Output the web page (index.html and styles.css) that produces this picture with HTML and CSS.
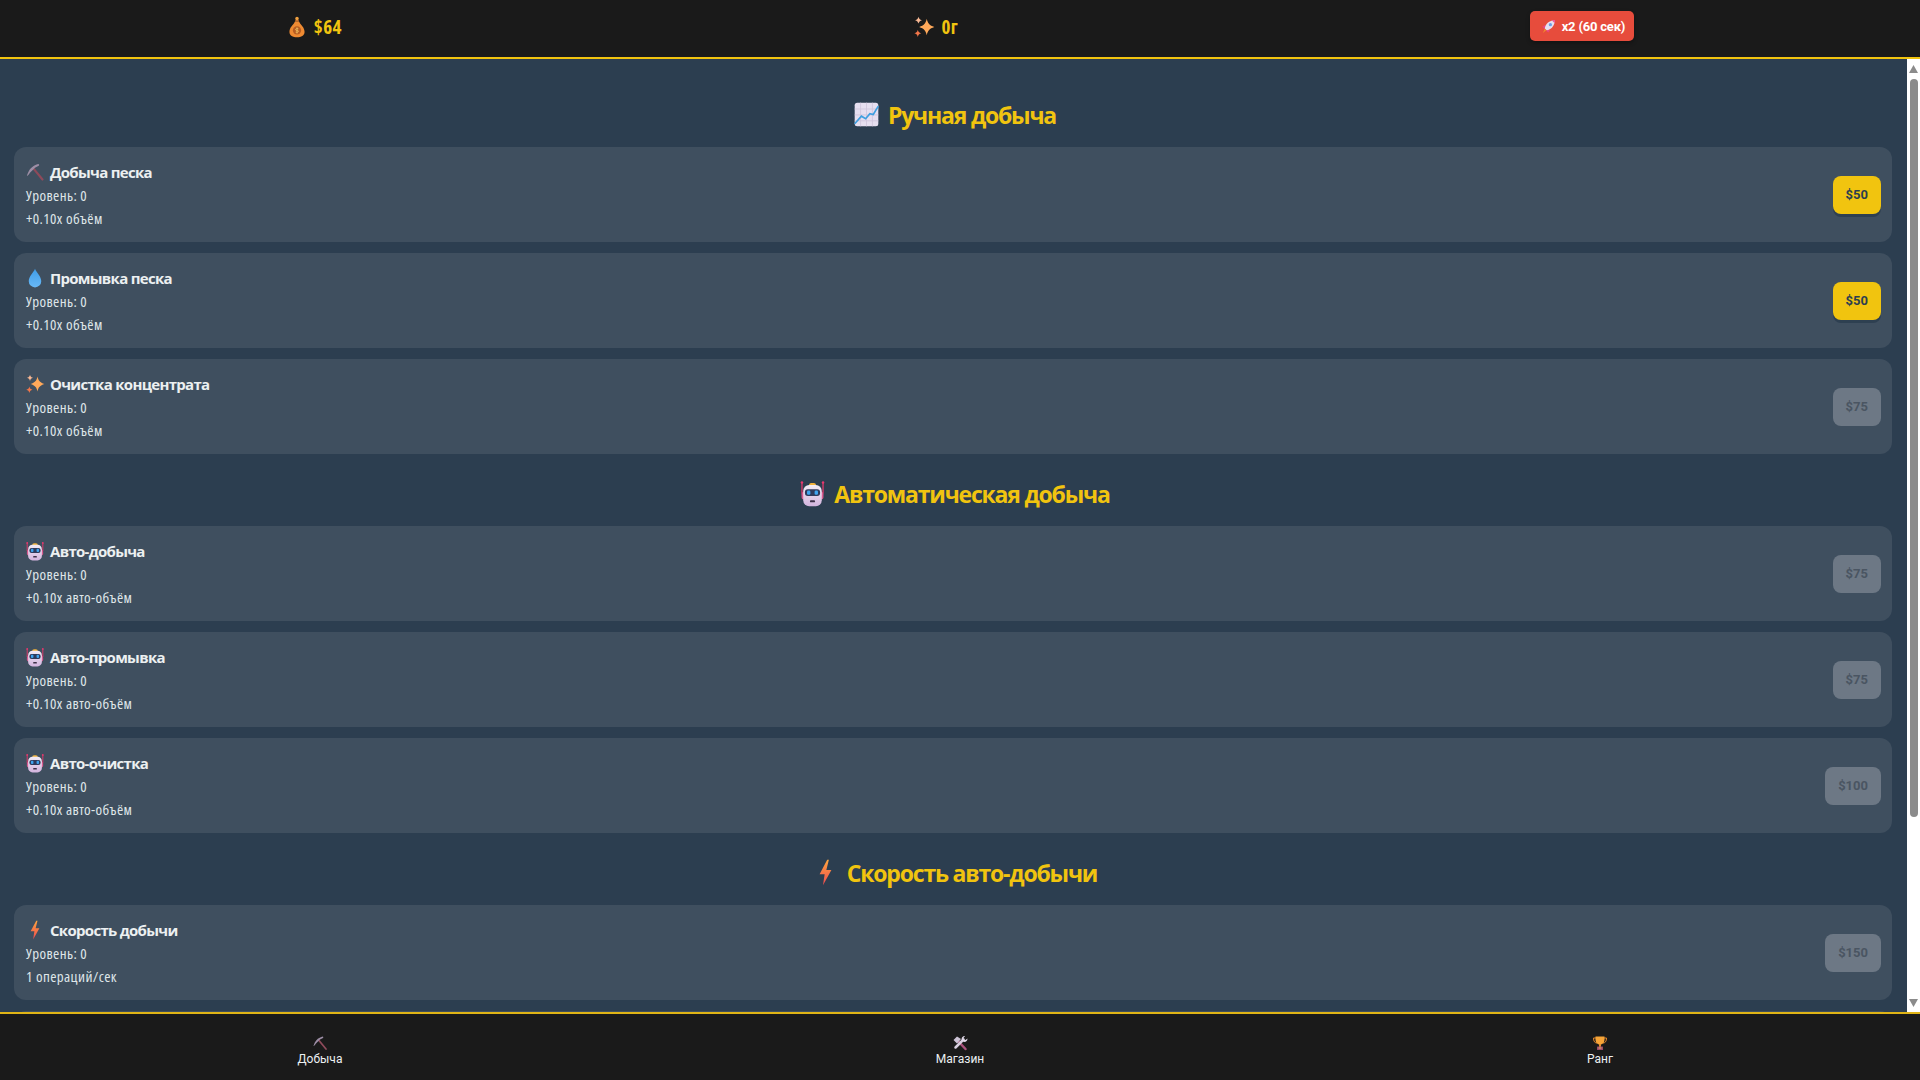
FILE: index.html
```html
<!DOCTYPE html>
<html lang="ru">
<head>
<meta charset="utf-8">
<title>Добыча</title>
<link rel="stylesheet" href="styles.css">
</head>
<body>

<svg class="sprites" width="0" height="0">
	<defs>
		<linearGradient id="bolt-fill" x1="0" y1="0" x2="0" y2="1">
			<stop offset="0" stop-color="#ffa63e"/>
			<stop offset="1" stop-color="#ee4a50"/>
		</linearGradient>
		<linearGradient id="robot-fill" x1="0" y1="0" x2="0" y2="1">
			<stop offset="0" stop-color="#f2ecf6"/>
			<stop offset="1" stop-color="#d3b4de"/>
		</linearGradient>
		<linearGradient id="drop-fill" x1="0" y1="0" x2="0" y2="1">
			<stop offset="0" stop-color="#3f9de8"/>
			<stop offset="1" stop-color="#68b8f6"/>
		</linearGradient>
		<symbol id="i-bag" viewBox="0 0 32 32">
			<path d="M13 8h6l-1-3h-4z" fill="#c9702c"/>
			<circle cx="16" cy="3.500" r="2.500" fill="#f0a040"/>
			<path d="M13 8h6c2 5 8 8 8 15 0 6-5 8-11 8S5 29 5 23c0-7 6-10 8-15z" fill="#ee8a32"/>
			<circle cx="16" cy="21" r="6" fill="#b65c22"/>
			<path d="M16 16.500v9M18 18.500h-3a1.300 1.300 0 0 0 0 2.500h2a1.300 1.300 0 0 1 0 2.500h-3" stroke="#f4c060" stroke-width="1.200" fill="none"/>
		</symbol>
		<symbol id="i-spark" viewBox="0 0 32 32">
			<path d="M20 4c1.500 7 4 9.500 11 12-7 2.500-9.500 5-11 12-1.500-7-4-9.500-11-12 7-2.500 9.500-5 11-12z" fill="#ffa95a"/>
			<path d="M8 1c.8 3 1.800 4 5 5-3.200 1-4.200 2-5 5-.8-3-1.800-4-5-5 3.200-1 4.200-2 5-5z" fill="#f8b894"/>
			<path d="M7 20c.8 3.200 1.800 4.200 5 5.200-3.200 1-4.200 2-5 5.300-.8-3.300-1.800-4.300-5-5.300 3.200-1 4.200-2 5-5.200z" fill="#f2764a"/>
		</symbol>
		<symbol id="i-rocket" viewBox="0 0 32 32">
			<path d="M9 13l-6 3 3 4 5-1zM19 23l-3 6-4-3 1-5z" fill="#e8457e"/>
			<path d="M8 20C9 11 17 3 30 2c-1 13-9 21-18 22z" fill="#e6dff0"/>
			<path d="M23 2.800L30 2l-.8 7z" fill="#f04f8e"/>
			<circle cx="20" cy="12" r="3.500" fill="#6a9ee8"/>
			<path d="M8 21l3 3-7 6z" fill="#f08a30"/>
		</symbol>
		<symbol id="i-chart" viewBox="0 0 32 32">
			<rect x="2" y="2" width="28" height="28" rx="3" fill="#e6dff0"/>
			<path d="M2 9.500h28M2 16.500h28M2 23.500h28M9 2v28M16 2v28M23 2v28" stroke="#cfc5dc" stroke-width="1"/>
			<path d="M2 27l8-9 5 3 5-6 4 1 6-10" stroke="#3f9fe0" stroke-width="2" fill="none"/>
		</symbol>
		<symbol id="i-pick" viewBox="0 0 32 32">
			<path d="M28 28L14 11" stroke="#8e4a5a" stroke-width="3.500" stroke-linecap="round"/>
			<path d="M3 22C6 12 11 6 21 3c2 0 2 2 1 3l-6 3-4 4c-3 2-5 6-8 9z" fill="#9d8ea6"/>
		</symbol>
		<symbol id="i-drop" viewBox="0 0 32 32">
			<path d="M16 1c2 6 10 12 10 20a10 10 0 0 1-20 0C6 13 14 7 16 1z" fill="url(#drop-fill)"/>
		</symbol>
		<symbol id="i-robot" viewBox="0 0 32 32">
			<path d="M3.500 3v13M28.500 3v13" stroke="#d83a6a" stroke-width="1.600"/>
			<circle cx="3.500" cy="3" r="1.500" fill="#e8386e"/>
			<circle cx="28.500" cy="3" r="1.500" fill="#e8386e"/>
			<rect x="3" y="14" width="26" height="9" rx="3" fill="#d85a90"/>
			<path d="M12 5c0-2 8-2 8 0v2h-8z" fill="#f0b23c"/>
			<rect x="5" y="6" width="22" height="25" rx="7" fill="url(#robot-fill)"/>
			<rect x="7" y="11" width="18" height="8" rx="3.500" fill="#2e3a5c"/>
			<rect x="9.500" y="12.500" width="4" height="5" rx="1.500" fill="#3fa4f0"/>
			<rect x="18.500" y="12.500" width="4" height="5" rx="1.500" fill="#3fa4f0"/>
			<rect x="13" y="24" width="6" height="2.500" rx="1" fill="#3e3048"/>
		</symbol>
		<symbol id="i-bolt" viewBox="0 0 32 32">
			<path d="M18 1L9 18h6l-2 13 10-18h-6l3-12z" fill="url(#bolt-fill)"/>
		</symbol>
		<symbol id="i-tools" viewBox="0 0 32 32">
			<path d="M11 11l16 17" stroke="#a8527c" stroke-width="5" stroke-linecap="round"/>
			<path d="M3 10l7-7 8 5-8 9z" fill="#cdc3d6"/>
			<path d="M23 9L7 25" stroke="#d8cfe0" stroke-width="5" stroke-linecap="round"/>
			<path d="M20 11c-2-4 0-9 6-9l-3 4 1 3 3 1 4-3c0 6-5 8-9 6z" fill="#e0d8e8"/>
		</symbol>
		<symbol id="i-trophy" viewBox="0 0 32 32">
			<path d="M8 6H3c0 7 3 10 7 10M24 6h5c0 7-3 10-7 10" stroke="#e88a2c" stroke-width="2" fill="none"/>
			<path d="M7 3h18v6c0 6-4 10-9 10S7 15 7 9z" fill="#f6a437"/>
			<rect x="14" y="18" width="4" height="6" fill="#e88a2c"/>
			<rect x="10" y="23" width="12" height="7" rx="1" fill="#9a4a68"/>
			<rect x="13" y="25" width="6" height="2" fill="#e8b060"/>
		</symbol>
	</defs>
</svg>

<header class="top-bar">
	<div class="stat stat-money"><svg class="ico"><use href="#i-bag"/></svg><span>$64</span></div>
	<div class="stat stat-gold"><svg class="ico"><use href="#i-spark"/></svg><span>0г</span></div>
	<button class="boost"><svg class="ico"><use href="#i-rocket"/></svg>x2 (60 сек)</button>
</header>

<div class="middle">
	<main class="content">
		<h2 class="section-title"><svg class="ico"><use href="#i-chart"/></svg>Ручная добыча</h2>

		<div class="upgrade">
			<div class="info">
				<div class="name"><svg class="ico"><use href="#i-pick"/></svg>Добыча песка</div>
				<div class="line">Уровень: 0</div>
				<div class="line">+0.10x объём</div>
			</div>
			<button class="buy">$50</button>
		</div>
		<div class="upgrade">
			<div class="info">
				<div class="name"><svg class="ico"><use href="#i-drop"/></svg>Промывка песка</div>
				<div class="line">Уровень: 0</div>
				<div class="line">+0.10x объём</div>
			</div>
			<button class="buy">$50</button>
		</div>
		<div class="upgrade">
			<div class="info">
				<div class="name"><svg class="ico"><use href="#i-spark"/></svg>Очистка концентрата</div>
				<div class="line">Уровень: 0</div>
				<div class="line">+0.10x объём</div>
			</div>
			<button class="buy off">$75</button>
		</div>

		<h2 class="section-title"><svg class="ico"><use href="#i-robot"/></svg>Автоматическая добыча</h2>

		<div class="upgrade">
			<div class="info">
				<div class="name"><svg class="ico"><use href="#i-robot"/></svg>Авто-добыча</div>
				<div class="line">Уровень: 0</div>
				<div class="line">+0.10x авто-объём</div>
			</div>
			<button class="buy off">$75</button>
		</div>
		<div class="upgrade">
			<div class="info">
				<div class="name"><svg class="ico"><use href="#i-robot"/></svg>Авто-промывка</div>
				<div class="line">Уровень: 0</div>
				<div class="line">+0.10x авто-объём</div>
			</div>
			<button class="buy off">$75</button>
		</div>
		<div class="upgrade">
			<div class="info">
				<div class="name"><svg class="ico"><use href="#i-robot"/></svg>Авто-очистка</div>
				<div class="line">Уровень: 0</div>
				<div class="line">+0.10x авто-объём</div>
			</div>
			<button class="buy off">$100</button>
		</div>

		<h2 class="section-title"><svg class="ico"><use href="#i-bolt"/></svg>Скорость авто-добычи</h2>

		<div class="upgrade">
			<div class="info">
				<div class="name"><svg class="ico"><use href="#i-bolt"/></svg>Скорость добычи</div>
				<div class="line">Уровень: 0</div>
				<div class="line">1 операций/сек</div>
			</div>
			<button class="buy off">$150</button>
		</div>
		<!-- next card, only its top edge shows above the nav -->
		<div class="upgrade"></div>
	</main>

	<div class="scrollbar">
		<svg class="arrow" viewBox="0 0 9 8"><path d="M4.500 0L9 8H0z"/></svg>
		<div class="thumb"></div>
		<svg class="arrow arrow-down" viewBox="0 0 9 8"><path d="M0 0h9L4.500 8z"/></svg>
	</div>
</div>

<nav class="bottom-bar">
	<div class="tab"><svg class="ico"><use href="#i-pick"/></svg><span>Добыча</span></div>
	<div class="tab"><svg class="ico"><use href="#i-tools"/></svg><span>Магазин</span></div>
	<div class="tab"><svg class="ico"><use href="#i-trophy"/></svg><span>Ранг</span></div>
</nav>

</body>
</html>
```

FILE: styles.css
```css
* {
  box-sizing: border-box;
}

html, body {
  height: 100%;
}

body {
  margin: 0;
  display: flex;
  flex-direction: column;
  overflow: hidden;
  background: #2c3e50;
  color: #ecf0f1;
  font-family: "Open Sans", "Noto Sans", sans-serif;
}

.sprites {
  position: absolute;
}

.ico {
  display: block;
  flex: none;
}

/* top bar */
.top-bar {
  height: 59px;
  flex: none;
  display: flex;
  justify-content: space-around;
  align-items: center;
  padding-bottom: 3px;
  background: #1a1a1a;
  border-bottom: 2px solid #f1c40f;
}

.stat {
  display: flex;
  align-items: center;
  gap: 6px;
  color: #f1c40f;
  font-size: 19px;
  font-weight: 700;
  font-stretch: 80%;
  letter-spacing: 0.4px;
}

.stat .ico {
  width: 22px;
  height: 22px;
}

.boost {
  display: flex;
  align-items: center;
  gap: 6px;
  height: 30px;
  margin-bottom: 2px;
  padding: 0 9px 0 11px;
  border: none;
  border-radius: 5px;
  background: #e74c3c;
  color: #fff;
  font-family: Roboto, "Liberation Sans", sans-serif;
  font-size: 13px;
  font-weight: 700;
  letter-spacing: -0.2px;
  box-shadow: 0 2px 4px rgba(0, 0, 0, 0.3);
}

.boost .ico {
  width: 15px;
  height: 15px;
}

/* middle part, content and its scrollbar */
.middle {
  flex: 1;
  min-height: 0;
  display: flex;
}

.content {
  flex: 1;
  min-width: 0;
  overflow: hidden;
  padding: 0 15px 0 14px;
}

.scrollbar {
  width: 13px;
  flex: none;
  display: flex;
  flex-direction: column;
  align-items: center;
  padding: 6px 0 5px;
  background: #fff;
}

.arrow {
  display: block;
  width: 9px;
  height: 8px;
  flex: none;
  fill: #8b8b8b;
}

.arrow-down {
  margin-top: auto;
}

.thumb {
  width: 8px;
  height: 738px;
  margin-top: 6px;
  background: #8b8b8b;
  border-radius: 4px;
}

.section-title {
  display: flex;
  align-items: center;
  justify-content: center;
  gap: 5px;
  height: 33px;
  margin: 39px 0 16px;
  color: #f1c40f;
  font-size: 23px;
  font-weight: 700;
  letter-spacing: -1.2px;
}

.section-title .ico {
  width: 27px;
  height: 27px;
  margin: 0 3px;
}

.upgrade + .section-title {
  margin-top: 23px;
}

.upgrade {
  display: flex;
  align-items: center;
  justify-content: space-between;
  height: 95px;
  margin-bottom: 11px;
  padding: 0 11px;
  background: #3f4f5f;
  border-radius: 12px;
}

.info {
  padding-top: 2px;
}

.name {
  display: flex;
  align-items: center;
  gap: 5px;
  margin: -1px 0 1px;
  font-size: 15px;
  font-weight: 700;
  line-height: 22px;
  letter-spacing: -0.7px;
}

.name .ico {
  width: 20px;
  height: 20px;
}

.line {
  padding-left: 1px;
  font-size: 15px;
  line-height: 23px;
  color: #dfe6e9;
  font-stretch: 80%;
  letter-spacing: 0.4px;
}

.buy {
  height: 38px;
  padding: 0 13px;
  border: none;
  border-radius: 8px;
  background: #f1c40f;
  color: #2c3e50;
  font-family: Roboto, "Liberation Sans", sans-serif;
  font-size: 13px;
  font-weight: 700;
  box-shadow: 0 3px 0 rgba(44, 62, 80, 0.9);
}

.buy.off {
  background: #6d7885;
  color: #4a5562;
  box-shadow: none;
}

/* bottom nav */
.bottom-bar {
  height: 68px;
  flex: none;
  display: grid;
  grid-template-columns: repeat(3, 1fr);
  align-items: center;
  padding-top: 8px;
  background: #1a1a1a;
  border-top: 2px solid #e0b416;
}

.tab {
  display: flex;
  flex-direction: column;
  align-items: center;
  color: #ecf0f1;
  font-family: Roboto, "Liberation Sans", sans-serif;
  font-size: 12px;
  line-height: 16px;
}

.tab .ico {
  width: 16px;
  height: 16px;
}
```
